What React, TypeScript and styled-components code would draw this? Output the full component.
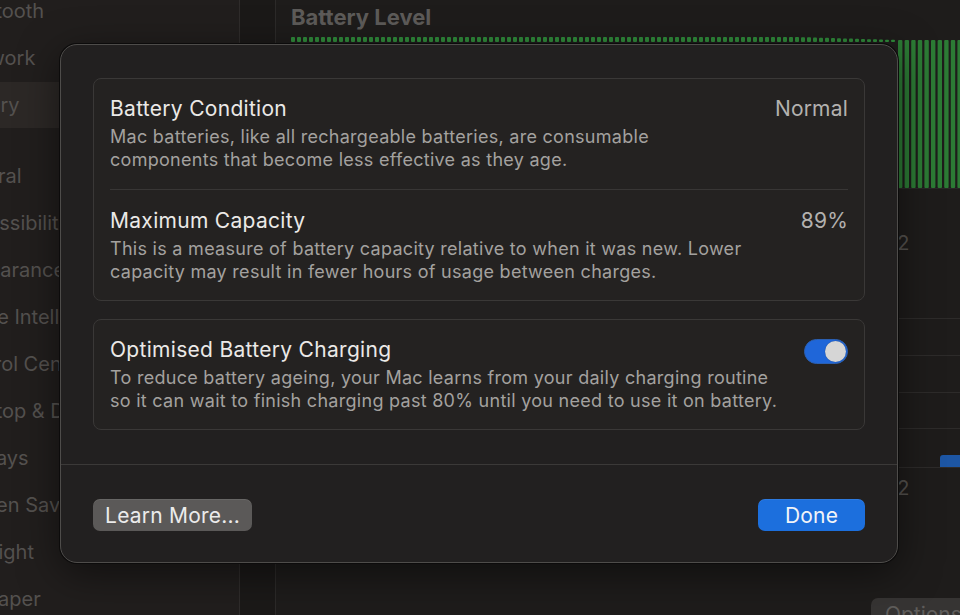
import React from "react";
import styled, { createGlobalStyle } from "styled-components";

const Global = createGlobalStyle`
  html, body { margin: 0; padding: 0; background: #1c1a19; overflow: hidden; }
  body { font-family: Inter, "Noto Sans", "Liberation Sans", sans-serif; -webkit-font-smoothing: antialiased; }
  #root { width: 960px; height: 615px; overflow: hidden; }
`;

const Window = styled.div`
  position: relative;
  width: 960px;
  height: 615px;
  overflow: hidden;
  display: grid;
  grid-template-columns: 240px 35px 735px;
  background: #1c1a19;
`;

const Sidebar = styled.nav`
  background: #211e1d;
  border-right: 1px solid #2f2c2b;
  overflow: hidden;
  display: flex;
  flex-direction: column;
  padding-right: 10px;
`;

const SideList = styled.ul`
  list-style: none;
  margin: -12px 0 0 0;
  padding: 0;
  display: flex;
  flex-direction: column;
`;

const SideItem = styled.li<{ $shift: number; $selected?: boolean; $groupStart?: boolean }>`
  height: 46px;
  margin-bottom: 1px;
  margin-top: ${(p) => (p.$groupStart ? 24 : 0)}px;
  display: flex;
  align-items: center;
  border-radius: 0 8px 8px 0;
  background: ${(p) => (p.$selected ? "#2c2826" : "transparent")};
  color: #54514f;
  font-size: 20px;
  white-space: nowrap;
  & > span { margin-left: ${(p) => p.$shift}px; }
`;

const Gutter = styled.div`
  background: #1b1918;
`;

const Main = styled.main`
  background: #1e1c1b;
  border-left: 1px solid #2c2a29;
  padding: 5px 16px 0 15px;
  display: flex;
  flex-direction: column;
`;

const SectionTitle = styled.h2`
  margin: 0;
  font-size: 22px;
  line-height: 25px;
  font-weight: 700;
  color: #5d5b59;
`;

const Chart = styled.svg`
  display: block;
  width: 670px;
  height: 530px;
`;

const FooterRow = styled.div`
  display: flex;
  justify-content: flex-end;
  margin-top: 38px;
`;

const OptionsButton = styled.button`
  font: inherit;
  font-size: 21px;
  height: 32px;
  padding: 0 14px;
  border: none;
  border-radius: 7px;
  background: #363433;
  color: #5f5d5b;
`;

/* ---------- Modal ---------- */

const Sheet = styled.section`
  position: absolute;
  left: 60px;
  top: 44px;
  width: 838px;
  height: 519px;
  box-sizing: border-box;
  background: #222020;
  border: 1px solid #4e4c4a;
  border-radius: 17px;
  box-shadow: 0 0 0 1px #0c0b0b, 0 10px 40px rgba(0, 0, 0, 0.5);
  display: flex;
  flex-direction: column;
`;

const SheetBody = styled.div`
  padding: 33px 32px 0 32px;
  display: flex;
  flex-direction: column;
  gap: 18px;
`;

const Group = styled.div`
  border: 1px solid #3a3837;
  border-radius: 8px;
  background: #242221;
  display: flex;
  flex-direction: column;
`;

const Row = styled.div`
  display: grid;
  grid-template-columns: 1fr auto;
  column-gap: 20px;
  padding: 18px 16px 17px 16px;
`;

const Divider = styled.hr`
  margin: 1px 16px 1px 16px;
  border: none;
  border-top: 1px solid #383635;
`;

const RowText = styled.div`
  display: flex;
  flex-direction: column;
  gap: 4px;
`;

const RowTitle = styled.div`
  font-size: 21px;
  line-height: 24px;
  color: #ebe9e7;
  letter-spacing: 0.3px;
`;

const RowDesc = styled.p`
  margin: 0;
  font-size: 18px;
  line-height: 23px;
  color: #a3a19f;
  letter-spacing: 0.28px;
  white-space: nowrap;
`;

const RowValue = styled.div`
  font-size: 21px;
  line-height: 24px;
  color: #b3b1af;
  letter-spacing: 0.2px;
`;

const Toggle = styled.div<{ $on: boolean }>`
  width: 44px;
  height: 25px;
  margin-top: 1px;
  box-sizing: border-box;
  border-radius: 13px;
  background: ${(p) => (p.$on ? "#1f66d9" : "#4a4847")};
  border: 1px solid ${(p) => (p.$on ? "#2b5fb0" : "#555")};
  display: flex;
  align-items: center;
  justify-content: ${(p) => (p.$on ? "flex-end" : "flex-start")};
  padding: 1px;
  &::after {
    content: "";
    width: 21px;
    height: 21px;
    border-radius: 50%;
    background: #d6d6d6;
    box-shadow: 0 0 1px rgba(0,0,0,0.4);
  }
`;

const SheetRule = styled.hr`
  margin: 34px 0 0 0;
  border: none;
  border-top: 1px solid #3b3938;
`;

const SheetFooter = styled.div`
  display: flex;
  justify-content: space-between;
  align-items: center;
  padding: 34px 32px 0 32px;
`;

const PushButton = styled.button<{ $primary?: boolean }>`
  font: inherit;
  font-size: 21px;
  height: 32px;
  border: none;
  border-radius: 7px;
  padding: 0 ${(p) => (p.$primary ? 26 : 12)}px;
  min-width: ${(p) => (p.$primary ? 107 : 159)}px;
  background: ${(p) => (p.$primary ? "#1c6fdd" : "#5b5958")};
  color: ${(p) => (p.$primary ? "#f2f4f8" : "#ebebeb")};
  box-shadow: inset 0 1px 0 rgba(255,255,255,0.08);
  letter-spacing: 0.2px;
`;

const sideItems: { label: string; shift: number; selected?: boolean; groupStart?: boolean }[] = [
  { label: "Bluetooth", shift: -46 },
  { label: "Network", shift: -45 },
  { label: "Battery", shift: -48, selected: true },
  { label: "General", shift: -52, groupStart: true },
  { label: "Accessibility", shift: -49 },
  { label: "Appearance", shift: -50 },
  { label: "Apple Intelligence & Siri", shift: -46 },
  { label: "Control Centre", shift: -51 },
  { label: "Desktop & Dock", shift: -52 },
  { label: "Displays", shift: -51 },
  { label: "Screen Saver", shift: -47 },
  { label: "Spotlight", shift: -50 },
  { label: "Wallpaper", shift: -54 },
];

function BatteryChart() {
  const dashes: React.ReactNode[] = [];
  for (let x = 0; x < 606; x += 6) {
    let h = 5;
    if (x > 505) h = Math.max(2, 5 - ((x - 505) / 100) * 3);
    dashes.push(
      <rect key={`d${x}`} x={x} y={12 - h} width={4} height={h} rx={1} fill="#2f8a3a" />
    );
  }
  const bars: React.ReactNode[] = [];
  for (let x = 607; x < 670; x += 6.6) {
    bars.push(<rect key={`b${x}`} x={x} y={10} width={4.4} height={148} rx={1} fill="#2c7b35" />);
  }
  const grid = [288, 325, 362, 398];
  return (
    <Chart viewBox="0 0 670 530">
      {dashes}
      {bars}
      <line x1={0} y1={158.5} x2={670} y2={158.5} stroke="#2a2827" />
      <text x={598} y={220} fontSize={20} fill="#55524f" fontFamily="Inter, sans-serif">12</text>
      {grid.map((y) => (
        <line key={y} x1={0} y1={y + 0.5} x2={670} y2={y + 0.5} stroke="#2d2b2a" />
      ))}
      <path d="M649 437 V428 a3 3 0 0 1 3 -3 H670 V437 Z" fill="#1d56a4" />
      <line x1={0} y1={437.5} x2={670} y2={437.5} stroke="#2d2b2a" />
      <text x={598} y={465} fontSize={20} fill="#55524f" fontFamily="Inter, sans-serif">12</text>
      <line x1={0} y1={533.5} x2={670} y2={533.5} stroke="#2a2827" />
    </Chart>
  );
}

export default function App() {
  return (
    <>
      <Global />
      <Window>
        <Sidebar>
          <SideList>
            {sideItems.map((it) => (
              <SideItem
                key={it.label}
                $shift={it.shift}
                $selected={it.selected}
                $groupStart={it.groupStart}
              >
                <span>{it.label}</span>
              </SideItem>
            ))}
          </SideList>
        </Sidebar>
        <Gutter />
        <Main>
          <SectionTitle>Battery Level</SectionTitle>
          <BatteryChart />
          <FooterRow>
            <OptionsButton>Options…</OptionsButton>
          </FooterRow>
        </Main>

        <Sheet role="dialog" aria-label="Battery Health">
          <SheetBody>
            <Group>
              <Row>
                <RowText>
                  <RowTitle>Battery Condition</RowTitle>
                  <RowDesc>
                    Mac batteries, like all rechargeable batteries, are consumable
                    <br />
                    components that become less effective as they age.
                  </RowDesc>
                </RowText>
                <RowValue>Normal</RowValue>
              </Row>
              <Divider />
              <Row>
                <RowText>
                  <RowTitle>Maximum Capacity</RowTitle>
                  <RowDesc>
                    This is a measure of battery capacity relative to when it was new. Lower
                    <br />
                    capacity may result in fewer hours of usage between charges.
                  </RowDesc>
                </RowText>
                <RowValue>89%</RowValue>
              </Row>
            </Group>
            <Group>
              <Row>
                <RowText>
                  <RowTitle>Optimised Battery Charging</RowTitle>
                  <RowDesc>
                    To reduce battery ageing, your Mac learns from your daily charging routine
                    <br />
                    so it can wait to finish charging past 80% until you need to use it on battery.
                  </RowDesc>
                </RowText>
                <Toggle $on />
              </Row>
            </Group>
          </SheetBody>
          <SheetRule />
          <SheetFooter>
            <PushButton>Learn More...</PushButton>
            <PushButton $primary>Done</PushButton>
          </SheetFooter>
        </Sheet>
      </Window>
    </>
  );
}
